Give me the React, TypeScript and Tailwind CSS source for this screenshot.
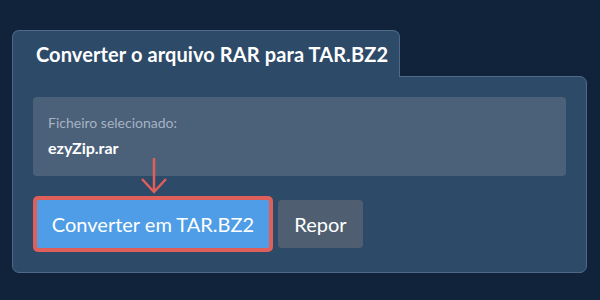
import React from "react";

export default function App() {
  return (
    <div
      className="w-[600px] h-[300px] bg-[#11233a] pt-[30px] pl-[12px]"
      style={{ fontFamily: "Lato, 'Open Sans', sans-serif" }}
    >
      <div className="w-[575px]">
        <div className="relative z-10 -mb-px w-[388px] h-[47px] rounded-t-[7px] border border-b-0 border-[#4e6a88] bg-[#2d4a69] pl-[23px] pt-[11px]">
          <h1 className="text-[20px] font-bold text-white leading-[24px] tracking-[0.1px]">
            Converter o arquivo RAR para TAR.BZ2
          </h1>
        </div>
        <div className="relative h-[197px] rounded-b-[7px] rounded-tr-[7px] border border-[#4e6a88] bg-[#2d4a69] px-[20px] pt-[20px]">
          <div className="h-[79px] rounded-[4px] bg-[#4b6079] pl-[15px] pt-[17px]">
            <div className="text-[14px] leading-[17px] text-[#a6b3c2]">
              Ficheiro selecionado:
            </div>
            <div className="mt-[7px] text-[16px] leading-[19px] font-bold text-white">
              ezyZip.rar
            </div>
          </div>
          <svg
            className="absolute left-[127px] top-[80px]"
            width="30"
            height="38"
            viewBox="0 0 30 38"
            fill="none"
          >
            <path
              d="M14 1 V35 M2 22 L14 35 L26 22"
              stroke="#e05f5a"
              strokeWidth="2.5"
            />
          </svg>
          <div className="mt-[20px] flex items-center gap-[5px]">
            <div className="rounded-[5px] bg-[#df5f5b] p-[4px]">
              <button className="h-[48px] w-[232px] rounded-[2px] bg-[#4f9de6] text-[20px] text-white">
                Converter em TAR.BZ2
              </button>
            </div>
            <button className="h-[48px] w-[85px] rounded-[4px] bg-[#4f5f71] text-[20px] text-white">
              Repor
            </button>
          </div>
        </div>
      </div>
    </div>
  );
}
